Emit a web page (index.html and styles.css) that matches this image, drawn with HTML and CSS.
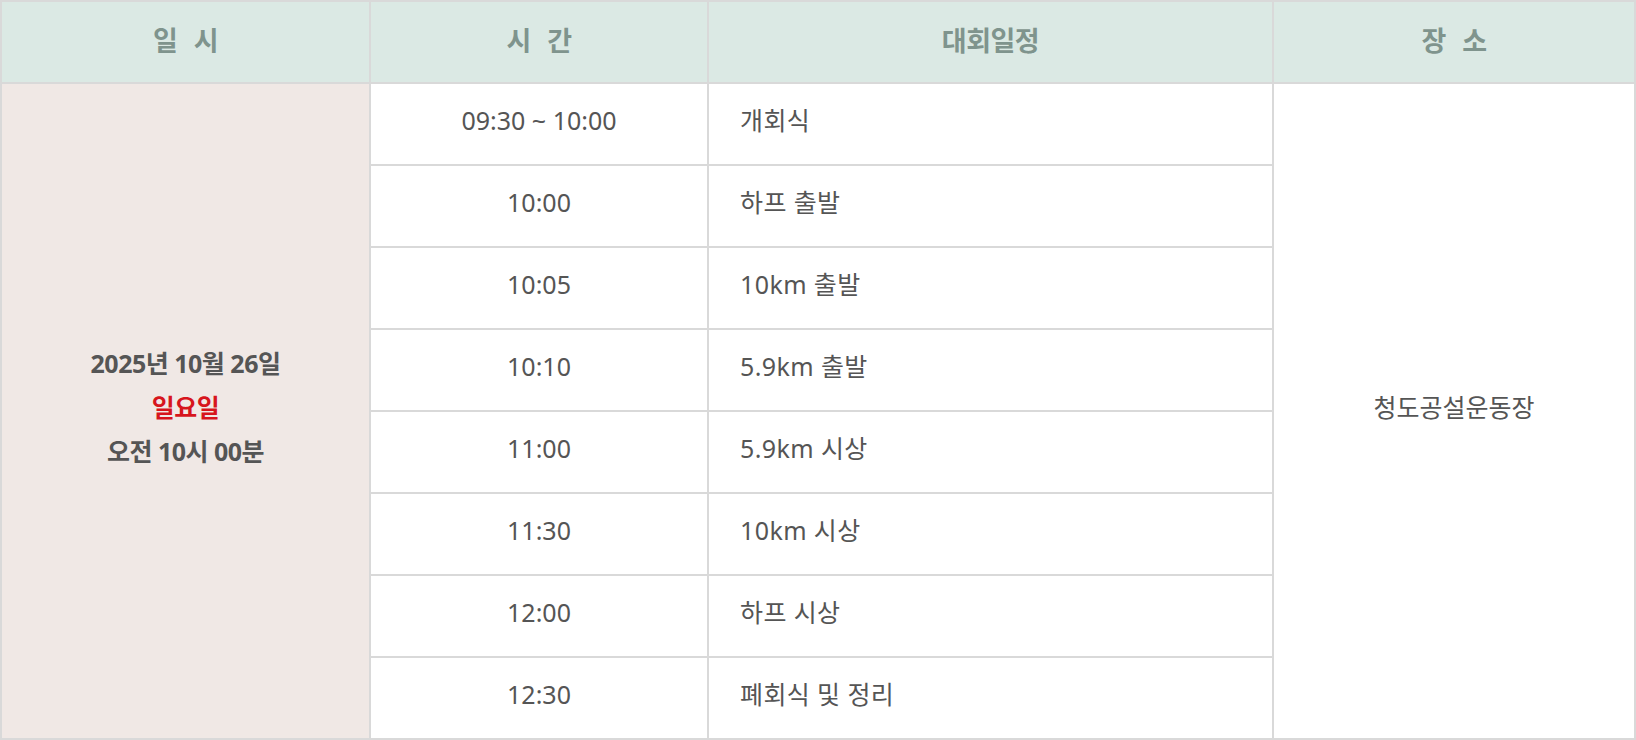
FILE: index.html
```html
<!DOCTYPE html>
<html lang="ko">
<head>
<meta charset="utf-8">
<title>대회일정</title>
<link rel="stylesheet" href="styles.css">
</head>
<body>
<div class="schedule">
  <div class="head">일 시</div>
  <div class="head">시 간</div>
  <div class="head">대회일정</div>
  <div class="head">장 소</div>

  <div class="date">
    <p>2025년 10월 26일</p>
    <p class="red">일요일</p>
    <p>오전 10시 00분</p>
  </div>

  <div class="time">09:30 ~ 10:00</div><div class="event">개회식</div>
  <div class="time">10:00</div><div class="event">하프 출발</div>
  <div class="time">10:05</div><div class="event">10km 출발</div>
  <div class="time">10:10</div><div class="event">5.9km 출발</div>
  <div class="time">11:00</div><div class="event">5.9km 시상</div>
  <div class="time">11:30</div><div class="event">10km 시상</div>
  <div class="time">12:00</div><div class="event">하프 시상</div>
  <div class="time">12:30</div><div class="event">폐회식 및 정리</div>

  <div class="place">청도공설운동장</div>
</div>
</body>
</html>
```

FILE: styles.css
```css
html, body {
  margin: 0;
  padding: 0;
  background: #ffffff;
}

body {
  font-family: "Noto Sans", "Noto Sans CJK KR", sans-serif;
  color: #555555;
}

.schedule {
  display: grid;
  grid-template-columns: 367px 336px 563px 360px;
  grid-template-rows: repeat(9, 80px);
  gap: 2px;
  padding: 2px;
  background: #d9d9d9;
  width: 1636px;
  height: 740px;
  box-sizing: border-box;
}

.schedule > div {
  display: flex;
  align-items: center;
  font-size: 25px;
  line-height: 32px;
  padding-bottom: 8px;
  box-sizing: border-box;
}

.schedule > .head {
  background: #dbe9e4;
  color: #7f948d;
  font-weight: 700;
  justify-content: center;
  font-size: 27px;
  word-spacing: 10px;
  letter-spacing: -0.5px;
  padding-bottom: 3px;
}

.date {
  grid-column: 1;
  grid-row: 2 / 10;
  background: #f0e8e5;
  flex-direction: column;
  justify-content: center;
  font-weight: 700;
  color: #555555;
}

.date p {
  margin: 0;
  line-height: 44px;
  letter-spacing: -0.5px;
}

.date .red {
  color: #d7151d;
}

.time {
  grid-column: 2;
  background: #ffffff;
  justify-content: center;
}

.event {
  grid-column: 3;
  background: #ffffff;
  padding-left: 31px;
  letter-spacing: 0.4px;
}

.place {
  grid-column: 4;
  grid-row: 2 / 10;
  background: #ffffff;
  justify-content: center;
}
```
